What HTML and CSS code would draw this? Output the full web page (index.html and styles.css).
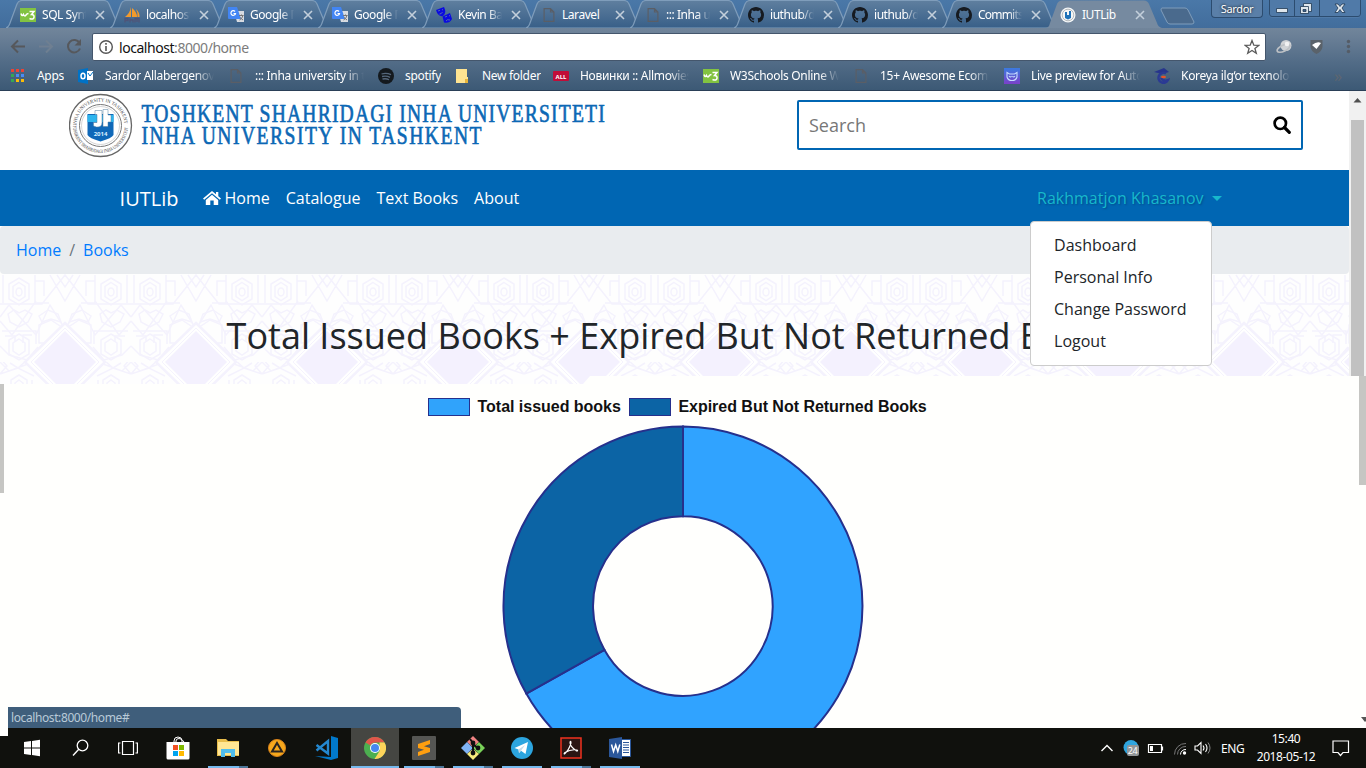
FILE: index.html
```html
<!DOCTYPE html>
<html lang="en">
<head>
<meta charset="utf-8">
<title>IUTLib</title>
<link rel="stylesheet" href="styles.css">
</head>
<body>
<svg class="defs" width="0" height="0">
  <defs>
    <linearGradient id="tabfill" x1="0" y1="0" x2="0" y2="1"><stop offset="0" stop-color="#5f7f9f"/><stop offset="1" stop-color="#385f88"/></linearGradient>
    <linearGradient id="blue" x1="0" y1="0" x2="0" y2="1"><stop offset="0" stop-color="#3b7be0"/><stop offset="1" stop-color="#7b40c8"/></linearGradient>
    <symbol id="tab" viewBox="0 0 116 28"><path d="M0 28 C3 27 3 26 4 23 L11 4 Q12.500 .5 16 .5 H98 Q101.500 .5 103 4 L111 23 C112 26 113 27 116 28Z" fill="url(#tabfill)" stroke="#7f9dbb" stroke-width="1.200"/></symbol>
    <symbol id="tab-on" viewBox="0 0 116 28"><path d="M0 28 C3 27 3 26 4 23 L11 4 Q12.500 .5 16 .5 H98 Q101.500 .5 103 4 L111 23 C112 26 113 27 116 28Z" fill="#768aa0"/></symbol>
    <symbol id="x" viewBox="0 0 10 10"><path d="M1 1L9 9M9 1L1 9" stroke="#c3cfdb" stroke-width="1.600"/></symbol>
    <symbol id="w3" viewBox="0 0 16 14"><path d="M0 0H16V14H0Z" fill="#82c341"/><path d="M1 5.500q1 3.500 2.500 1q1 2.500 2.500 .5q1-1.500 2.500-1.500M9.500 3.500h4.500l-2.500 3q3 0 2.500 2.800t-4.500 1.200" fill="none" stroke="#fff" stroke-width="1.500"/></symbol>
    <symbol id="pma" viewBox="0 0 16 16"><path d="M7 0V10H1Q6 6 7 0ZM8 1Q13 5 13 10H8ZM12 2Q16 6 15.500 10H13.500Q14 6 12 2Z" fill="#f39a2c"/><path d="M1 15.500v-4h3v2H1M6 15.500v-4M6 13h3v2.500M11 15.500v-4h4v4M13 12v3" stroke="#4f5478" stroke-width="1.300" fill="none"/></symbol>
    <symbol id="gt" viewBox="0 0 16 16"><path d="M6 4H16V15H9Z" fill="#d8dce2"/><path d="M0 0H9L13 12H1Q0 12 0 11Z" fill="#4285f4"/><path d="M7 4.500A2.300 2.300 0 1 0 7.500 6.500H5.500" fill="none" stroke="#fff" stroke-width="1.200"/><path d="M11 8.500H15.500M13.500 7.500V8.500M15 8.500Q14 12 11.500 13M12 10.500L15 13" stroke="#777" fill="none"/></symbol>
    <symbol id="masks" viewBox="0 0 16 16"><path d="M0 3L8 0Q11 6 7 9Q2 10 0 3Z" fill="#0a0ae0"/><path d="M6.500 9.500L14 6L16 12Q13 17 8 15.500Z" fill="#0a0ae0"/><path d="M2 4l2-.7M6 3l1-.5M3.500 7q2 0 3-2M9 10l2-.7M13 9l1-.5M10 14q1-2 4-1" stroke="#6580a5" stroke-width=".8" fill="none"/></symbol>
    <symbol id="page" viewBox="0 0 11 14"><path d="M.6.6H7L10.400 4V13.400H.6ZM7 .6V4h3.400" fill="none" stroke="#5a5e66" stroke-width="1.200"/></symbol>
    <symbol id="gh" viewBox="0 0 16 16"><path fill="#161a20" fill-rule="evenodd" d="M8 0C3.580 0 0 3.580 0 8c0 3.540 2.290 6.530 5.470 7.590.4.070.55-.17.55-.38 0-.19-.01-.82-.01-1.490-2.010.37-2.530-.49-2.690-.94-.09-.23-.48-.94-.82-1.130-.28-.15-.68-.52-.01-.53.63-.01 1.080.58 1.230.82.72 1.210 1.870.87 2.330.66.070-.52.28-.87.51-1.070-1.780-.2-3.640-.89-3.640-3.950 0-.87.31-1.590.82-2.150-.08-.2-.36-1.020.08-2.120 0 0 .67-.21 2.200.82.64-.18 1.320-.27 2-.27s1.360.09 2 .27c1.530-1.040 2.200-.82 2.200-.82.44 1.100.16 1.920.08 2.120.51.56.82 1.270.82 2.150 0 3.070-1.870 3.750-3.650 3.950.29.25.54.73.54 1.480 0 1.070-.01 1.930-.01 2.200 0 .21.15.46.55.38A8 8 0 0 0 16 8c0-4.420-3.580-8-8-8z"/></symbol>
    <pattern id="girih" x="0" y="0" width="131" height="131" patternUnits="userSpaceOnUse" patternTransform="translate(0 -43)">
      <g fill="none" stroke="#f4f2fd" stroke-width="1.500">
        <path d="M19 47l10 6v15l-10 6l-10-6v-15zM19 51.500l6 4v10l-6 4l-6-4v-10zM19 57a3 4 0 1 1 0 8a3 4 0 1 1 0-8"/>
        <path d="M111 47l10 6v15l-10 6l-10-6v-15zM111 51.500l6 4v10l-6 4l-6-4v-10zM111 57a3 4 0 1 1 0 8a3 4 0 1 1 0-8"/>
        <path d="M35 44v28h14M35 50h9v15M95 44v28H81M95 50h-9v15M3 44v28M127 44v28M0 73H42L65 44L88 73H131M50 44L65 70L80 44M57 44l8 12l8-12"/>
        <path d="M0 86L9 74L36 104L50 74L65 98L80 74L95 104L121 74L131 86M0 90L12 104L36 70M131 90L119 104L95 70"/>
        <path d="M8 83l6-4l5 3l6-3l7 4l-4 8l-9 5l-9-5zM100 83l6-4l5 3l6-3l7 4l-4 8l-9 5l-9-5zM39 85l9-6l10 4l3 8l-10-3l-9 3zM91 85l-9-6l-10 4l-3 8l10-3l9 3z"/>
        <path d="M39 94l12-5l12 8l-13 15h-11zM91 94l-12-5l-12 8l13 15h11zM2 100h34v13M128 100H94v13M5 105h10v6M32 104h-9v8M125 105h-10v6"/>
        <path d="M19 103l10 6v14l-10 6l-10-6v-14zM19 108l6 4v8l-6 4l-6-4v-8zM111 103l10 6v14l-10 6l-10-6v-14zM111 108l6 4v8l-6 4l-6-4v-8z"/>
        <path d="M0 115l9 9L27 129L38 116M131 115l-9 9l-18 5l-11-13"/>
        <path d="M0 0l9 9L28 2M131 0l-9 9L103 2M0 12L18 6L34 14M131 12L113 6L97 14M0 -4L7 4L0 12M131 -4L124 4L131 12M10 1l8 5l9-8M121 1l-8 5l-9-8"/>
        <path d="M19 13l8 5v14l-8 5l-8-5V18zM19 18l4 3v8l-4 3l-4-3v-8zM111 13l8 5v14l-8 5l-8-5V18zM111 18l4 3v8l-4 3l-4-3v-8zM32 18v20M98 18v20M0 38H38M93 38H131"/>
      </g>
      <path d="M65 92L105 131L65 170L25 131ZM65 -39L105 0L65 39L25 0Z" fill="#fff" stroke="#f4f2fd" stroke-width="2.500"/>
      <path d="M65 97L99 131L65 165L31 131ZM65 -34L99 0L65 34L31 0Z" fill="none" stroke="#f5f3fd"/>
      <path d="M65 100L96 131L65 162L34 131ZM65 -31L96 0L65 31L34 0Z" fill="#f4f1fe"/>
    </pattern>
  </defs>
</svg>

<div class="chrome">
  <div class="tabstrip">
    <div class="tab"><svg class="shape"><use href="#tab"/></svg><svg class="fav"><use href="#w3"/></svg><span class="title fade">SQL Syntax</span><svg class="close"><use href="#x"/></svg></div>
    <div class="tab"><svg class="shape"><use href="#tab"/></svg><svg class="fav"><use href="#pma"/></svg><span class="title fade">localhost /</span><svg class="close"><use href="#x"/></svg></div>
    <div class="tab"><svg class="shape"><use href="#tab"/></svg><svg class="fav"><use href="#gt"/></svg><span class="title fade">Google П</span><svg class="close"><use href="#x"/></svg></div>
    <div class="tab"><svg class="shape"><use href="#tab"/></svg><svg class="fav"><use href="#gt"/></svg><span class="title fade">Google П</span><svg class="close"><use href="#x"/></svg></div>
    <div class="tab"><svg class="shape"><use href="#tab"/></svg><svg class="fav"><use href="#masks"/></svg><span class="title fade">Kevin Bac</span><svg class="close"><use href="#x"/></svg></div>
    <div class="tab"><svg class="shape"><use href="#tab"/></svg><svg class="fav pgi"><use href="#page"/></svg><span class="title">Laravel</span><svg class="close"><use href="#x"/></svg></div>
    <div class="tab"><svg class="shape"><use href="#tab"/></svg><svg class="fav pgi"><use href="#page"/></svg><span class="title fade">::: Inha uni</span><svg class="close"><use href="#x"/></svg></div>
    <div class="tab"><svg class="shape"><use href="#tab"/></svg><svg class="fav"><use href="#gh"/></svg><span class="title fade">iuthub/dig</span><svg class="close"><use href="#x"/></svg></div>
    <div class="tab"><svg class="shape"><use href="#tab"/></svg><svg class="fav"><use href="#gh"/></svg><span class="title fade">iuthub/dig</span><svg class="close"><use href="#x"/></svg></div>
    <div class="tab"><svg class="shape"><use href="#tab"/></svg><svg class="fav"><use href="#gh"/></svg><span class="title fade tight">Commits</span><svg class="close"><use href="#x"/></svg></div>
    <div class="tab"><svg class="shape"><use href="#tab-on"/></svg><svg class="fav" viewBox="0 0 16 16"><circle cx="8" cy="8" r="7.500" fill="#f4f6f7"/><circle cx="8" cy="8" r="5.800" fill="none" stroke="#b5babd"/><path d="M5 5h2v3h2V4h2v7l-3 1.500l-3-1.500z" fill="#1d71b8"/></svg><span class="title">IUTLib</span><svg class="close"><use href="#x"/></svg></div>
    <svg class="newtab" width="36" height="18" viewBox="0 0 36 18"><path d="M2 1H25Q27 1 28 3L34 15Q34 17 32 17H10Q8 17 7 15L1 3Q1 1 2 1Z" fill="#4a6a8d" stroke="#7f9dbb"/></svg>
    <div class="win user">Sardor</div>
    <svg class="win ctl" width="92" height="18" viewBox="0 0 92 18"><path d="M.5 0V14Q.5 16.500 3 16.500H89Q91.500 16.500 91.500 14V0M25.500 0V16M50.500 0V16" fill="none" stroke="#2c4c6f"/><g fill="#dfe6ec" stroke="#1f3853" stroke-width=".8"><path d="M7.500 8.500h11v4h-11z"/><path d="M34.500 3.500h8v8h-8z"/><path d="M31.500 6.500h8v7h-8z"/><path d="M34 9.500h3v2h-3z" fill="#3d618b"/><path d="M66 4h3l2 2.500l2-2.500h3l-3 4l3 4.500h-3l-2-3l-2 3h-3l3-4.500z"/></g></svg>
  </div>
  <div class="toolbar">
    <svg class="navbtns" width="92" height="30" viewBox="0 0 92 30"><g fill="none" stroke="#56585c" stroke-width="2"><path d="M25 15.500H12M18 9.500L12 15.500L18 21.500"/><path d="M39 15.500H52M46 9.500L52 15.500L46 21.500" stroke="#6f7f91"/><path d="M79.500 12A6.200 6.200 0 1 0 80 17.500" /></g><path d="M81 8v6.500h-6.500z" fill="#56585c"/></svg>
    <div class="omnibox">
      <svg width="16" height="16" viewBox="0 0 16 16"><circle cx="8" cy="8" r="6.300" fill="none" stroke="#555" stroke-width="1.400"/><path d="M8 7v5M8 4v1.800" stroke="#555" stroke-width="1.600"/></svg>
      <span class="url">localhost<i>:8000/home</i></span>
      <svg class="star" width="16" height="16" viewBox="0 0 16 16"><path d="M8 1.500L9.800 6.200L14.800 6.400L10.900 9.500L12.300 14.300L8 11.500L3.700 14.300L5.100 9.500L1.200 6.400L6.200 6.200Z" fill="none" stroke="#5a5a5a" stroke-width="1.300"/></svg>
    </div>
    <svg class="ext" width="90" height="20" viewBox="0 0 90 20"><circle cx="11" cy="8.500" r="5.500" fill="#d0d3d6"/><ellipse cx="8.500" cy="11" rx="7" ry="3" fill="none" stroke="#bdc1c5" stroke-width="1.700" transform="rotate(-25 9 11)"/><circle cx="12" cy="7" r="2.300" fill="#f2f2f2"/><path d="M35.500 3h12v7q-1 5-6 7q-5-2-6-7z" fill="#5a626a"/><path d="M37 8q5-4 9-2l-4.500 6z" fill="#fff"/><g fill="#555c66"><circle cx="73.500" cy="4.500" r="1.700"/><circle cx="73.500" cy="9.500" r="1.700"/><circle cx="73.500" cy="14.500" r="1.700"/></g></svg>
  </div>
  <div class="bookmarks">
    <div class="bm"><svg viewBox="0 0 16 16"><g fill="#ea4335"><path d="M1 1h3v3H1zM6 1h3v3H6zM11 1h3v3h-3z"/></g><path d="M1 6h3v3H1zM1 11h3v3H1z" fill="#35a853"/><path d="M6 6h3v3H6zM11 6h3v3h-3z" fill="#4a8cf5"/><path d="M6 11h3v3H6zM11 11h3v3h-3z" fill="#fbbc05"/></svg><span>Apps</span></div>
    <div class="bm"><svg viewBox="0 0 16 16"><path d="M0 2L10 0V16L0 14Z" fill="#0072c6"/><path d="M9 3h6v9H9z" fill="#fff"/><path d="M10 5l2 3l3-4" fill="none" stroke="#0072c6"/><ellipse cx="5" cy="8" rx="2" ry="2.800" fill="none" stroke="#fff" stroke-width="1.500"/></svg><span class="fade">Sardor Allabergenov</span></div>
    <div class="bm"><svg class="pg"><use href="#page"/></svg><span class="fade">::: Inha university in ta</span></div>
    <div class="bm"><svg viewBox="0 0 16 16"><circle cx="8" cy="8" r="8" fill="#14191e"/><path d="M3.500 6q5-1.500 9.500.7M4 8.500q4.500-1 8 .8M4.500 11q4-.8 6.500.8" stroke="#55677b" stroke-width="1.300" fill="none"/></svg><span>spotify</span></div>
    <div class="bm"><svg viewBox="0 0 16 16"><path d="M1 1H12V9H13V15H1Z" fill="#ffe491"/><path d="M10 11h3v4h-3z" fill="#e8b53c"/></svg><span>New folder</span></div>
    <div class="bm"><svg viewBox="0 0 16 16"><rect y="3" width="16" height="10" rx="1" fill="#c10d38"/><text x="8" y="10.500" text-anchor="middle" class="tiny">ALL</text></svg><span class="fade">Новинки :: Allmovies</span></div>
    <div class="bm"><svg><use href="#w3"/></svg><span class="fade">W3Schools Online We</span></div>
    <div class="bm"><svg class="pg"><use href="#page"/></svg><span class="fade">15+ Awesome Ecomm</span></div>
    <div class="bm"><svg viewBox="0 0 16 16"><path d="M0 0H16V16H0Z" fill="url(#blue)"/><path d="M3 4.500l2.500 1.500h5L13 4.500v4.500q-1 3.500-5 3.500T3 9zM5 8q1.500 2 2.500 0M8.500 8q1 2 2.500 0" fill="none" stroke="#c6dcff" stroke-width="1.100"/></svg><span class="fade">Live preview for Auto</span></div>
    <div class="bm"><svg viewBox="0 0 16 16"><path d="M0 4L10 0L15 4L8 6Z" fill="#27358c"/><path d="M12 5.500A5 5 0 1 0 14 12Q9 14 7 9.500" fill="none" stroke="#2b3a94" stroke-width="2.400"/><ellipse cx="9.500" cy="9" rx="2.500" ry="1.300" fill="#e4532a"/></svg><span class="fade">Koreya ilg‘or texnologi</span></div>
    <div class="more">»</div>
  </div>
</div>

<div class="viewport">
  <div class="site">
    <header class="masthead">
      <svg width="540" height="66" viewBox="0 0 540 66">
        <circle cx="31.500" cy="33.500" r="31" fill="#fff" stroke="#666" stroke-width="1.300"/>
        <circle cx="31.500" cy="33.500" r="21" fill="none" stroke="#777" stroke-width="1"/>
        <circle cx="31.500" cy="33.500" r="19" fill="none" stroke="#bbb" stroke-width=".6"/>
        <path id="ring-t" d="M7.500 33.500A24 24 0 0 1 55.500 33.500" fill="none"/>
        <path id="ring-b" d="M4 33.500A27.500 27.500 0 0 0 59 33.500" fill="none"/>
        <text class="seal"><textPath href="#ring-t" textLength="73" lengthAdjust="spacingAndGlyphs">INHA UNIVERSITY IN TASHKENT</textPath></text>
        <text class="seal"><textPath href="#ring-b" textLength="84" lengthAdjust="spacingAndGlyphs">TOSHKENT SHAHRIDAGI INHA UNIVERSITETI</textPath></text>
        <path d="M18.500 22H44.500V43Q43 46 31.500 49.500Q20 46 18.500 43Z" fill="#0f68b8"/>
        <path d="M18.500 23H44.500V30H18.500Z" fill="#2db5ee"/>
        <path d="M26 18.500h7v12q0 5-5.500 4.500l-3-1v-3.500h3.500v-8h-2zM34 17.500h5v5.500h3v7h-3v4.500h-5z" fill="#fff" stroke="#527f9f" stroke-width=".5"/>
        <text x="31.500" y="43.500" text-anchor="middle" class="year">2014</text>
        <g transform="translate(72.500 0) scale(.8 1)" class="uni">
          <text x="0" y="30" textLength="579">TOSHKENT SHAHRIDAGI INHA UNIVERSITETI</text>
          <text x="0" y="52.500" textLength="425">INHA UNIVERSITY IN TASHKENT</text>
        </g>
      </svg>
      <div class="search"><span>Search</span><svg width="18" height="18" viewBox="0 0 18 18"><circle cx="7.300" cy="7.300" r="5.700" fill="none" stroke="#000" stroke-width="2.700"/><path d="M11.500 11.500L16.300 16.300" stroke="#000" stroke-width="3.200" stroke-linecap="round"/></svg></div>
    </header>
    <nav class="navbar">
      <span class="brand">IUTLib</span>
      <span class="link"><svg width="18" height="16" viewBox="0 0 18 16"><path d="M9 1L0 8.500L1.200 9.800L9 3.300L16.800 9.800L18 8.500L15.300 6.200V2H13V4.300Z" fill="#fff"/><path d="M9 4.700L2.800 9.900V15H7.300V10.500H10.700V15H15.200V9.900Z" fill="#fff"/></svg> Home</span>
      <span class="link">Catalogue</span>
      <span class="link">Text Books</span>
      <span class="link">About</span>
      <div class="account">Rakhmatjon Khasanov<i class="caret"></i>
        <div class="dropdown"><div>Dashboard</div><div>Personal Info</div><div>Change Password</div><div>Logout</div></div>
      </div>
    </nav>
    <div class="crumbs"><a>Home</a><span>/</span><a>Books</a></div>
    <section class="hero">
      <svg class="tiles" width="1349" height="110"><rect width="1349" height="110" fill="#fefefe"/><rect width="1349" height="110" fill="url(#girih)"/></svg>
      <h1>Total Issued Books + Expired But Not Returned Books</h1>
    </section>
  </div>
  <div class="scrollbar"><svg width="17" height="17" viewBox="0 0 17 17"><path d="M4.500 11.500L8.500 7L12.500 11.500Z" fill="#505050"/></svg><div class="thumb"></div></div>
</div>

<main class="chart">
  <div class="edge left"></div>
  <div class="plot">
    <div class="legend">
      <i class="swatch light"></i><span class="l1">Total issued books</span>
      <i class="swatch dark"></i><span class="l2">Expired But Not Returned Books</span>
    </div>
    <svg class="donut" width="364" height="304" viewBox="-182 -182 364 304">
      <g stroke="#26308c" stroke-width="2">
        <path d="M0 -179.500A179.500 179.500 0 1 1 -156.700 87.600L-78.500 43.900A89.800 89.800 0 1 0 0 -89.800Z" fill="#30a3ff"/>
        <path d="M-156.700 87.600A179.500 179.500 0 0 1 0 -179.500V-89.800A89.800 89.800 0 0 0 -78.500 43.900Z" fill="#0c64a5"/>
      </g>
    </svg>
  </div>
  <div class="edge right"></div>
  <div class="status">localhost:8000/home#</div>
  <svg class="arrow" width="5" height="6" viewBox="0 0 5 6"><path d="M0 0H5V4L4 5Z" fill="#555"/></svg>
</main>

<footer class="taskbar">
  <div class="strip"></div>
  <div class="apps">
    <div class="app"><svg width="18" height="18" viewBox="0 0 18 18"><path d="M1 3L8 2V8.500H1ZM9 1.900L17 .8V8.500H9ZM1 9.500H8V16L1 15ZM9 9.500H17V17.200L9 16.100Z" fill="#fff"/></svg></div>
    <div class="app"><svg width="18" height="18" viewBox="0 0 18 18"><circle cx="10.500" cy="6.500" r="5.300" fill="none" stroke="#fff" stroke-width="1.300"/><path d="M6.800 10.300L1 16.500" stroke="#fff" stroke-width="1.400"/></svg></div>
    <div class="app view"><svg width="20" height="16" viewBox="0 0 20 16"><path d="M4.500 1.500h11v13h-11zM2.500 3H.6v10h1.900M17.500 3h1.900v10h-1.900" fill="none" stroke="#fff" stroke-width="1.200"/></svg></div>
    <div class="app store"><svg width="24" height="24" viewBox="0 0 24 24"><path d="M8 7V5Q8 1 12 1T16 5V7M10 7V5Q10 2.500 13 2.500T18 6V7" fill="none" stroke="#fff"/><path d="M.5 6H23.500V22Q23.500 23.500 22 23.500H2Q.5 23.500 .5 22Z" fill="#fff"/><path d="M7 9h5v5H7z" fill="#f25022"/><path d="M13 9h5v5h-5z" fill="#7fba00"/><path d="M7 15h5v5H7z" fill="#00a4ef"/><path d="M13 15h5v5h-5z" fill="#ffb900"/></svg></div>
    <div class="app run multi"><svg width="22" height="20" viewBox="0 0 22 20"><path d="M0 1h9l2 2h11v15H0z" fill="#e8bd4b"/><path d="M1 4H22V17H1Z" fill="#ffe694"/><path d="M4 11H18V19H14V15H8V19H4Z" fill="#50bdec"/></svg></div>
    <div class="app"><svg width="20" height="20" viewBox="0 0 20 20"><circle cx="10" cy="10" r="8.500" fill="#f7a81c" stroke="#d9821a"/><path d="M10 5L15 13.500H5Z" fill="none" stroke="#2a2420" stroke-width="2"/></svg></div>
    <div class="app"><svg width="24" height="24" viewBox="0 0 24 24"><path d="M17 0L24 2V22L17 24L1 20L17 21Z" fill="#0179cb"/><path d="M2.500 9L14 17.500V5L2.500 14.500" fill="none" stroke="#2488d0" stroke-width="2.400"/></svg></div>
    <div class="app run on"><svg width="22" height="22" viewBox="0 0 22 22"><circle cx="11" cy="11" r="11" fill="#4caf50"/><path d="M11 0A11 11 0 0 1 20.500 5.500H11A5.500 5.500 0 0 0 6.200 8.300L1.500 5.500A11 11 0 0 1 11 0Z" fill="#e0564b"/><path d="M20.500 5.500A11 11 0 0 1 10.500 22L15.800 13.700L15.500 5.500Z" fill="#fdd35a"/><circle cx="11" cy="11" r="5" fill="#fff"/><circle cx="11" cy="11" r="4" fill="#4688f1"/></svg></div>
    <div class="app run multi"><svg width="24" height="24" viewBox="0 0 24 24"><rect width="24" height="24" rx="1" fill="#555653"/><path d="M18 4V8L12 10.200L18 12V16L6 20V16L12 13.800L6 12V8Z" fill="#ff9f0f"/></svg></div>
    <div class="app run multi"><svg width="24" height="24" viewBox="0 0 24 24"><path d="M12 0L18 6L12 11L6 6Z" fill="#ef8383"/><path d="M6 6L12 12L6 18L0 12Z" fill="#80b3f5"/><path d="M18 6L24 12L18 18L12 12Z" fill="#79d258"/><path d="M12 13L18 18L12 24L6 18Z" fill="#f7ec7c"/><path d="M9 3L12 7V17M12 8L16.500 12" stroke="#111" stroke-width="2" fill="none"/><circle cx="12" cy="17" r="2.400" fill="#111"/><circle cx="12" cy="7" r="2.400" fill="#111"/><circle cx="17" cy="12" r="2.400" fill="#111"/></svg></div>
    <div class="app run"><svg width="22" height="22" viewBox="0 0 22 22"><circle cx="11" cy="11" r="11" fill="#2ca5df"/><path d="M3.500 11L17 5L14.500 17L10 13.800L8 16L7.500 12.500Z" fill="#fff"/><path d="M7.500 12.500L14 8L10 13.800L8 16Z" fill="#c5dcea"/></svg></div>
    <div class="app run multi"><svg width="22" height="22" viewBox="0 0 22 22"><path d="M1 1H21V21H1Z" fill="#2b1513" stroke="#f0321f" stroke-width="1.500"/><path d="M4.500 17Q9 13 11 6Q11 3.500 10 5Q9.500 9 16.500 14Q18.500 14 17 13Q11 12 5 15.500Q3.500 17 4.500 17Z" fill="none" stroke="#fff" stroke-width="1.100"/></svg></div>
    <div class="app run"><svg width="22" height="22" viewBox="0 0 22 22"><path d="M10 2.500H21.500V19.500H10Z" fill="#fff" stroke="#2b579a"/><path d="M14 5.500h6M14 8h6M14 10.500h6M14 13h6M14 15.500h6" stroke="#2b579a"/><path d="M0 2L13 0V22L0 20Z" fill="#2b579a"/><path d="M2.500 7.500L4.500 14.500L6.700 8L8.800 14.500L10.800 7.500" fill="none" stroke="#fff" stroke-width="1.500"/></svg></div>
  </div>
  <div class="tray">
    <svg width="114" height="20" viewBox="1099 738 114 20"><path d="M1101.500 751L1107 745.500L1112.500 751" fill="none" stroke="#fff" stroke-width="1.400"/><circle cx="1131" cy="747.500" r="7.500" fill="#2fa5de"/><rect x="1127" y="745" width="12" height="11" rx="2" fill="#929698"/><text x="1132.500" y="754" text-anchor="middle" class="badge">24</text><path d="M1148.500 744.500h13v8h-13zM1162.500 746.500v4" fill="none" stroke="#fff" stroke-width="1.200"/><path d="M1150 746h3v5h-3z" fill="#fff"/><g fill="none"><path d="M1174.500 754.500A11 11 0 0 1 1186 743.500M1177.500 754.500A8 8 0 0 1 1186 746.500" stroke="#777"/><path d="M1180.500 754.500A5 5 0 0 1 1186 749.500" stroke="#fff"/></g><circle cx="1184.500" cy="753" r="1.700" fill="#fff"/><path d="M1195 746h2.500l3.500-3.500v11l-3.500-3.500h-2.500zM1203 745.500q2 2.500 0 5M1205.500 744q3 4 0 8" fill="none" stroke="#fff" stroke-width="1.100"/><path d="M1208 742.500q4 5.500 0 11" fill="none" stroke="#888"/></svg>
    <span class="lang">ENG</span>
    <div class="clock"><div>15:40</div><div>2018-05-12</div></div>
    <svg class="note" width="18" height="17" viewBox="0 0 18 17"><path d="M1 1H16.500V12.500H11L8.500 15.500L6 12.500H1Z" fill="none" stroke="#fff" stroke-width="1.200"/></svg>
  </div>
</footer>
</body>
</html>
```
FILE: styles.css
```css
* { box-sizing: border-box; }
body { margin: 0; width: 1366px; height: 768px; overflow: hidden; display: flex; flex-direction: column; font-family: "Open Sans", sans-serif; background: #fffffd; }
svg { display: block; flex: none; }
.defs { position: absolute; }

/* browser frame */
.chrome { height: 91px; flex: none; color: #fff; font: 12px "Noto Sans", "Open Sans", sans-serif; letter-spacing: -0.3px; background: linear-gradient(#71859b 28px, #6b8097 36px, #526c87 62px, #3c5975 90px); border-bottom: 1px solid #2a3f57; }
.tabstrip { height: 28px; display: flex; padding-left: 6px; background: linear-gradient(#4a78a8, #426d9c); }
.tab { position: relative; width: 116px; height: 28px; margin-right: -12px; display: flex; align-items: center; padding-left: 14px; padding-top: 2px; flex: none; }
.shape { position: absolute; left: 0; top: 0; width: 116px; height: 28px; }
.fav { position: relative; width: 16px; height: 16px; margin-right: 6px; }
.fav.pgi { height: 14px; margin-left: 1px; margin-right: 5px; }
.title { position: relative; width: 44px; overflow: hidden; white-space: nowrap; line-height: 18px; letter-spacing: -0.45px; }
.title.tight { letter-spacing: -0.8px; }
.fade { -webkit-mask-image: linear-gradient(90deg, #000 70%, transparent); mask-image: linear-gradient(90deg, #000 70%, transparent); }
.close { position: relative; width: 10px; height: 10px; margin-left: 9px; }
.newtab { margin: 7px 0 0 10px; }
.win.user { width: 52px; height: 18px; margin-left: 15px; border: 1px solid #2c4c6f; border-top: 0; border-radius: 0 0 4px 4px; text-align: center; font-size: 11px; line-height: 18px; background: #5a7fa8; text-shadow: 0 0 3px #000; }
.win.ctl { margin-left: 6px; background: #507aa8; border-radius: 0 0 4px 4px; }
.toolbar { height: 33px; display: flex; align-items: center; padding-top: 5px; }
.navbtns { margin-top: -2px; }
.omnibox { width: 1174px; height: 28px; background: #fff; border: 1px solid #44566c; border-radius: 2px; display: flex; align-items: center; padding: 0 5px; }
.url { flex: 1; margin-left: 5px; color: #111; font-size: 14px; letter-spacing: -0.45px; }
.url i { font-style: normal; color: #7c7c7c; }
.ext { margin-left: 9px; }
.bookmarks { height: 29px; display: grid; grid-template-columns: 68px 151px 149px 77px 98px 150px 151px 150px 150px 180px 20px; padding-left: 10px; align-items: center; padding-top: 1px; }
.bm { display: flex; align-items: center; white-space: nowrap; overflow: hidden; }
.bm svg { width: 16px; height: 16px; margin-right: 11px; }
.bm svg.pg { height: 14px; width: 14px; margin-right: 12px; }
.bm span { max-width: 109px; overflow: hidden; line-height: 18px; }
.bm span.fade { -webkit-mask-image: linear-gradient(90deg, #000 82%, transparent); mask-image: linear-gradient(90deg, #000 82%, transparent); }
.more { color: #5e6670; font-size: 16px; }
.tiny { font: bold 6px "Open Sans", sans-serif; fill: #fff; letter-spacing: 0; }

/* library site */
.viewport { height: 285px; flex: none; display: flex; position: relative; z-index: 2; }
.site { width: 1349px; height: 285px; }
.masthead { height: 79px; background: #fff; display: flex; justify-content: space-between; align-items: flex-start; padding: 1px 46px 0 68.5px; }
.seal { font: 5px "Liberation Serif", serif; fill: #444; }
.year { font: bold 6px "Open Sans", sans-serif; fill: #d9efff; }
.uni { font: 24.500px "Liberation Serif", serif; fill: #0c68b5; stroke: #0c68b5; stroke-width: .65; }
.search { margin-top: 8px; width: 506px; height: 50px; border: 2px solid #0066b3; border-radius: 2px; display: flex; align-items: center; justify-content: space-between; padding: 0 10px; font-size: 18px; color: #777; }
.navbar { position: relative; z-index: 3; height: 56px; background: #0066b3; color: #fff; display: flex; align-items: center; padding-left: 120px; font-size: 16px; }
.brand { font-size: 20px; margin-right: 16px; margin-left: -.4px; }
.link { display: flex; gap: 4px; padding: 0 8px; align-items: center; }
.account { position: relative; margin-left: auto; margin-right: 127.500px; color: #17b8cc; text-shadow: 1px 1px 2px #004f8c; display: flex; align-items: center; }
.caret { margin-left: 8px; border: 5px solid transparent; border-top-color: #17b8cc; border-bottom: 0; }
.dropdown { position: absolute; left: -7px; top: 34px; width: 182px; height: 145px; background: #fff; border: 1px solid #ccc; border-radius: 4px; padding: 8px 0; color: #212529; text-shadow: none; }
.dropdown div { height: 32px; line-height: 31px; padding-left: 23px; white-space: nowrap; }
.crumbs { height: 48px; background: #e9ecef; border-radius: 4px; padding: 0 16px; display: flex; align-items: center; font-size: 16px; color: #6c757d; }
.crumbs a { color: #007bff; }
.crumbs span { padding: 0 8px; }
.hero { height: 110px; display: grid; clip-path: polygon(0 0, 100% 0, 100% 102px, 590px 102px, 583px 110px, 0 110px); }
.tiles { grid-area: 1 / 1; }
.hero h1 { grid-area: 1 / 1; margin: 37px 0 0; text-align: center; font-size: 36px; line-height: 50px; font-weight: 400; color: #212529; }
.scrollbar { width: 17px; background: #f1f1f1; }
.thumb { width: 13px; height: 256px; margin: 12px 2px 0; background: #c1c1c1; }

/* chart */
.chart { height: 352px; flex: none; position: relative; display: flex; justify-content: space-between; background: #fffffd; overflow: hidden; }
.edge { height: 109px; background: #c6c6c3; }
.edge.left { width: 4px; margin-top: 8px; }
.edge.right { width: 7px; }
.plot { display: flex; flex-direction: column; align-items: center; padding-top: 22px; }
.legend { display: flex; align-items: center; width: 500px; height: 18px; margin-left: -8px; font: bold 16px "Liberation Sans", Arial, sans-serif; letter-spacing: -0.02px; color: #111; white-space: nowrap; }
.swatch { width: 42px; height: 18px; border: 1px solid #26308c; flex: none; }
.light { background: #30a3fb; }
.dark { background: #0c64a5; }
.l1 { margin: 0 8.500px 0 8px; }
.l2 { margin-left: 7px; }
.donut { margin-top: 8px; margin-left: 2px; }
.status { position: absolute; left: 8px; bottom: 0; width: 453px; height: 21px; background: #3f5e7b; border-radius: 0 4px 0 0; color: #b9cad8; font: 12px/21px "Noto Sans", sans-serif; padding-left: 3px; letter-spacing: -0.4px; }
.arrow { position: absolute; right: 0; top: 341px; }

/* desktop bar */
.taskbar { height: 40px; flex: none; background: #10110d; display: flex; justify-content: space-between; color: #fff; }
.strip { width: 8px; height: 8px; background: #fffffd; }
.apps { display: flex; margin-left: -1px; margin-right: auto; }
.app { width: 49px; height: 40px; display: flex; align-items: center; justify-content: center; }
.app.view { padding-right: 3px; }
.app.store { padding-right: 1px; }
.run { background: linear-gradient(#76b9ed, #76b9ed) 5px 38px / 40px 2px no-repeat; }
.run.multi { background: linear-gradient(90deg, #76b9ed 31px, #4c7698 31px) 5px 38px / 40px 2px no-repeat; }
.run.on { background: linear-gradient(#454642 38px, #76b9ed 38px) 1px 0 / 48px 40px no-repeat; }
.tray { display: flex; align-items: center; font: 12px "Noto Sans", sans-serif; letter-spacing: -0.4px; }
.badge { font: 9px "Noto Sans", sans-serif; fill: #fff; }
.lang { width: 24px; margin-left: 8px; }
.clock { width: 66px; margin-left: 8px; text-align: center; line-height: 18px; }
.note { margin: 0 16px 0 13px; }
```
